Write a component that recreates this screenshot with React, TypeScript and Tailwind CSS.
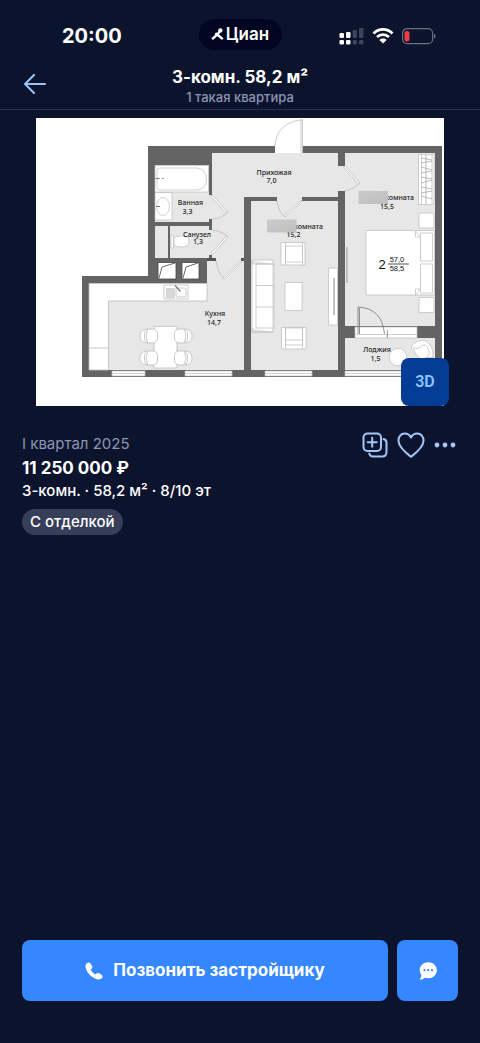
import React from "react";

function CianLogo() {
  return (
    <svg viewBox="0 0 13 13" className="h-[13px] w-[13px]" fill="none" aria-hidden="true">
      <circle cx="9.400" cy="2.400" r="2.200" fill="#fff" />
      <path d="M8.800 3.500 6.200 6.600 1.100 11.200" stroke="#fff" strokeWidth="2.400" />
      <path d="M4.300 5.200 6.800 7 11.800 11.200" stroke="#fff" strokeWidth="2.400" />
    </svg>
  );
}

function SignalIcon() {
  return (
    <svg viewBox="0 0 25 17" className="h-[17px] w-[25px]" aria-hidden="true">
      <g fill="#fff">
        <rect x="0.5" y="5" width="4.5" height="5" rx="1.3" />
        <rect x="7" y="4" width="4.5" height="6" rx="1.3" />
        <rect x="0.5" y="12" width="4.5" height="4.5" rx="1.3" />
        <rect x="7" y="12" width="4.5" height="4.5" rx="1.3" />
      </g>
      <g fill="#3d4359">
        <rect x="13.7" y="2" width="4.3" height="8" rx="1.3" />
        <rect x="20" y="0" width="4.5" height="10" rx="1.3" />
        <rect x="13.7" y="12" width="4.3" height="4.5" rx="1.3" />
        <rect x="20" y="12" width="4.5" height="4.5" rx="1.3" />
      </g>
    </svg>
  );
}

function WifiIcon() {
  return (
    <svg viewBox="0 0 22 16" className="h-4 w-[22px]" fill="none" aria-hidden="true">
      <path d="M1.5 5.4C7 .1 15 .1 20.500 5.400" stroke="#fff" strokeWidth="2.8" />
      <path d="M5 9.100c3.500-3.300 8.500-3.300 12 0" stroke="#fff" strokeWidth="2.700" />
      <path d="M11 15.600 7.400 12c2-1.900 5.200-1.900 7.200 0z" fill="#fff" />
    </svg>
  );
}

function BatteryIcon() {
  return (
    <svg viewBox="0 0 34 17" className="h-[17px] w-[34px]" fill="none" aria-hidden="true">
      <rect x="0.600" y="0.700" width="30" height="15" rx="4.500" stroke="#6a7084" strokeWidth="1.200" />
      <rect x="2.500" y="3" width="5" height="10.500" rx="2.200" fill="#f23c43" />
      <path d="M32 5.700c2 .8 2 4.200 0 5z" fill="#6a7084" />
    </svg>
  );
}

function BackIcon() {
  return (
    <svg viewBox="0 0 22 20" className="h-5 w-[22px]" fill="none" stroke="#9cc3fb" strokeWidth="2" strokeLinecap="round" strokeLinejoin="round" aria-hidden="true">
      <path d="M10 1 1 10l9 9M1.500 10H21" />
    </svg>
  );
}

function CompareIcon() {
  return (
    <svg viewBox="0 0 26 26" className="h-[26px] w-[26px]" fill="none" stroke="#a3c6f8" strokeWidth="2" strokeLinecap="round" aria-hidden="true">
      <rect x="1.500" y="1.500" width="17.500" height="17.500" rx="4" />
      <path d="M10.200 5.700v9M5.700 10.200h9" />
      <path d="M21.500 7c1.800.4 3 1.800 3 3.700V20c0 2.800-1.800 4.500-4.500 4.500h-9c-1.900 0-3.300-1.100-3.800-2.900" />
    </svg>
  );
}

function HeartIcon() {
  return (
    <svg viewBox="0 0 28 26" className="h-[26px] w-7" fill="none" stroke="#a3c6f8" strokeWidth="2" strokeLinejoin="round" aria-hidden="true">
      <path d="M14 24.800C9.500 21.300 1.800 15.600 1.500 9 1.300 4.600 4 1.500 7.700 1.500c2.700 0 5 1.300 6.300 4 1.300-2.700 3.600-4 6.300-4 3.700 0 6.400 3.100 6.200 7.500-.3 6.600-8 12.300-12.500 15.800z" />
    </svg>
  );
}

function MoreIcon() {
  return (
    <svg viewBox="0 0 22 6" className="h-1.5 w-[22px]" fill="#a3c6f8" aria-hidden="true">
      <circle cx="3" cy="3" r="2.400" />
      <circle cx="11" cy="3" r="2.400" />
      <circle cx="19" cy="3" r="2.400" />
    </svg>
  );
}

function PhoneIcon() {
  return (
    <svg viewBox="0 0 18 18" className="h-[18px] w-[18px]" fill="#fff" aria-hidden="true">
      <path d="M2.100.9C3.300.1 4.700.2 5.500 1.500l1.600 2.400c.6 1 .4 1.900-.4 2.700l-.9.800c.7 1.900 2.500 3.800 4.700 5l1-.9c.8-.7 1.700-.8 2.600-.2l2.400 1.500c1.300.9 1.500 2.100.5 3.300-1 1.200-2.500 1.700-4.300 1.300C7 16.300 1.700 11 .6 5.300.2 3.500.8 1.900 2.100.9z" />
    </svg>
  );
}

function ChatIcon() {
  return (
    <svg viewBox="0 0 18 18" className="h-[18px] w-[18px]" aria-hidden="true">
      <path d="M9.300.3C4.500.3.700 3.700.7 8c0 1.900.6 3.500 1.700 4.800C2.300 14.700 1.700 16.300.6 17.600c2 .1 3.800-.6 5.300-1.900 1 .3 2.100.5 3.400.5 4.800 0 8.500-3.400 8.500-8S14.100.3 9.300.3z" fill="#fff" />
      <g fill="#3587ff">
        <circle cx="5.500" cy="8.200" r="1.100" />
        <circle cx="9.300" cy="8.200" r="1.100" />
        <circle cx="13" cy="8.200" r="1.100" />
      </g>
    </svg>
  );
}

function KitchenChair({ x, y, flip }: { x: number; y: number; flip?: boolean }) {
  return (
    <g transform={`translate(${x} ${y})${flip ? " scale(-1 1)" : ""}`}>
      <path d="M8-6.500C2-8-1-4-1 0s3 8 9 6.500z" />
      <rect x="3.500" y="-7" width="13" height="14" rx="4.500" />
      <path d="M6.500-6Q3.500 0 6.500 6" />
    </g>
  );
}

function FloorPlan() {
  return (
    <svg
      viewBox="0 0 408 288"
      className="block w-full bg-white font-['Noto_Sans',sans-serif]"
      role="img"
      aria-label="Планировка квартиры"
    >
      <defs>
        <linearGradient id="patch" x1="0" y1="0" x2="1" y2="1">
          <stop offset="0" stopColor="#d9d9d9" />
          <stop offset="1" stopColor="#b0b0b0" />
        </linearGradient>
      </defs>
      <g transform="translate(-36 -118)">
        {/* walls and floors */}
        <path d="M148 146H442V377H82V276H148z" fill="#646464" />
        <g fill="#e7e7e7">
          <path d="M212 153H338V197H244V260H212z" />
          <path d="M207 260H244V370H89V283H207z" />
          <path d="M155 165H209V222H155zM155 226H168V258H155zM170 226H209V258H170z" />
          <path d="M251 201H338V370H251zM345 153H435V326H345zM345 338H435V370H345z" />
          <path d="M338 166H345V191H338zM277 197H302V201H277zM208 195H212V219H208zM208 230H212V255H208z" />
        </g>
        <path d="M207 258H216V261H207zM241 258H244V261H241z" fill="#555" />

        {/* openings */}
        <g fill="#fff" stroke="#bdbdbd" strokeWidth=".7">
          <path d="M112 371H145V376H112zM185 371H232V376H185zM265 371H312V376H265zM345 371H435V376H345zM355 327H417V338H355z" />
          <path d="M112 373.500H145M185 373.500H232M265 373.500H312M345 373.500H435M355 334.500H417" />
        </g>
        <path d="M275 145.500H302.500V153H275z" fill="#fff" />
        <g fill="none" stroke="#bcbcbc" strokeWidth=".8">
          <path d="M302.500 153V119.500Q276 123 275 146M301 120V153" />
          <path d="M360 183Q353 190 345 191M228 212Q221 219 212 219M212 230Q222 231 228 237M277 201Q279 213 285 217M216 261Q218 273 224 279" />
          <g fill="#fff">
            <path d="M345 166 360 183 358.500 184 343.500 167z" />
            <path d="M302 201 285 217 284 215.500 300 201z" />
            <path d="M212 195 228 212 226.500 213 211 197z" />
            <path d="M212 255 228 237 226.500 236 211 253z" />
            <path d="M242 261 224 279 223 277.500 240 261z" />
          </g>
        </g>
        <path d="M387.300 330v8M358 334V307Q382 308 384.500 334M359.500 334v-26" stroke="#777" strokeWidth=".8" fill="none" />

        {/* bathroom and toilet */}
        <g fill="#fff" stroke="#bbb" strokeWidth=".7">
          <path d="M155 165.500H208.500V192H155zM155 192.500H172V220H155z" />
          <path d="M160 168h37q9 1 9.500 11t-9.500 11h-37q-3 0-3-3v-16q0-3 3-3z" />
          <ellipse cx="163" cy="206.500" rx="6.500" ry="9" />
          <path d="M171 235h2.500v13H171z" />
          <path d="M174 238q2-2 8-2 7 0 7 5.500t-7 5.500q-6 0-8-2z" />
        </g>
        <path d="M155.500 178.500h4M162 178.500h1.500M156 206.500h4" stroke="#777" strokeWidth="1" />

        {/* ventilation shafts */}
        <path d="M158 262.500H176V279H158zM182 262.500H199V279H182z" fill="#fff" stroke="#444" strokeWidth=".8" />
        <path d="M159 278l3-11 13-4M183 278l3-11 12-4" fill="none" stroke="#555" strokeWidth=".9" />

        {/* kitchen */}
        <g fill="#fff" stroke="#bdbdbd" strokeWidth=".8">
          <path d="M89 283.500H207V301H108.500V370H89z" />
          <path d="M89 348H108.500M164 285H188V299H164z" />
          <rect x="176" y="288" width="10" height="9" rx="1.500" />
          <path d="M154 326.500H177V368H154z" />
          <KitchenChair x={141} y={336} />
          <KitchenChair x={141} y={358} />
          <KitchenChair x={191} y={336} flip />
          <KitchenChair x={191} y={358} flip />
        </g>
        <path d="M166 289h9M166 291h9M166 293h9M166 295h9M166 297h9" stroke="#999" strokeWidth=".8" />
        <path d="M175 285.500l5.500 6" stroke="#777" strokeWidth="1.200" />

        {/* living room */}
        <g fill="#fff" stroke="#c2c2c2" strokeWidth=".8">
          <path d="M252 260H273V332H252zM256 264H274V328H256zM256 285.500H274M256 307H274M252 260V264H273M252 328V332H273" />
          <path d="M281 242.500H305V265H281zM285.500 246H302.500V262H285.500zM285.500 242.500V265M302.500 242.500V265" />
          <path d="M281.500 327.500H306V349H281.500zM285.500 328H302.500V345H285.500zM285.500 340H302.500M285.500 327.500V349M302.500 327.500V349" />
          <path d="M285 282.500H302V310.500H285zM328.500 268H337.500V325H328.500z" />
        </g>
        <path d="M334 278V315" stroke="#999" strokeWidth="1.200" />

        {/* bedroom */}
        <g fill="#fff" stroke="#c2c2c2" strokeWidth=".8">
          <path d="M418.500 154.500H434V204.500H418.500zM421.500 155V204M432 155V204" />
          <path d="M419 213H434V228H419zM419 297.500H434V312.500H419z" />
          <path d="M366 230.500H434.500V295H366zM420.500 233H432.500V261H420.500zM420.500 264H432.500V293H420.500z" />
          <path d="M415.500 231v6h5M415.500 295v-6h5M415.500 231l5 6M415.500 295l5-6" />
        </g>
        <path d="M426 155V204M421 158l11 2M421 163l11-2M421 167l11 3M421 173l11-2M421 177l11 2M421 183l11-3M421 187l11 2M421 193l11-2M421 196l11 3" stroke="#aaa" strokeWidth=".8" />
        <path d="M347 247V283" stroke="#b5b5b5" strokeWidth="1.500" />

        {/* loggia */}
        <g fill="#fff" stroke="#c2c2c2" strokeWidth=".8">
          <circle cx="398" cy="357" r="8.800" />
          <path d="M411 347q3-5 9-6.500 6-1 10 4 4 6 3 13h-14q-5-2-8-10.500z" />
          <path d="M413.500 347.500q4 2 6 0 5-5 8 0 4 6-1 10-5 3-9-1-3-3-4-9z" />
        </g>

        {/* room labels */}
        <g fill="#222" fontSize="7" fontWeight="500" textAnchor="middle">
          <text x="274" y="174.500">Прихожая</text>
          <text x="271.500" y="183">7,0</text>
          <text x="190.500" y="205">Ванная</text>
          <text x="187.500" y="213.500">3,3</text>
          <text x="197" y="236.500">Санузел</text>
          <text x="198" y="243.500">1,3</text>
          <text x="215" y="315.500">Кухня</text>
          <text x="214" y="325">14,7</text>
          <text x="308.500" y="228.500">комната</text>
          <text x="293.500" y="236.500">15,2</text>
          <text x="399.500" y="200">комната</text>
          <text x="387" y="209">15,5</text>
          <text x="377" y="352">Лоджия</text>
          <text x="375.500" y="360.500">1,5</text>
        </g>
        <path d="M267 219.500H296.500V232.500H267zM358.500 191H388V204H358.500z" fill="url(#patch)" />
        <g fill="#111" textAnchor="middle" fontFamily="Liberation Sans, sans-serif">
          <text x="382" y="269" fontSize="13">2</text>
          <text x="397" y="262" fontSize="7.500">57,0</text>
          <text x="397" y="271" fontSize="7.500">58,5</text>
        </g>
        <path d="M388 264H409" stroke="#222" strokeWidth=".8" />
      </g>
    </svg>
  );
}

export default function App() {
  return (
    <div className="flex min-h-screen flex-col bg-[#0c142d] font-[Inter,sans-serif] text-white">
      <header className="border-b border-[#2a3047]">
        <div className="grid grid-cols-3 items-center pt-[18px]">
          <time className="pt-1 pl-[62px] text-xl leading-7 font-bold">20:00</time>
          <div className="flex h-[31px] w-[83px] items-center justify-center gap-0.5 justify-self-center rounded-full bg-[#020620]">
            <CianLogo />
            <span className="text-[17px] leading-6 font-semibold">Циан</span>
          </div>
          <div className="flex items-center gap-2 justify-self-end pt-1 pr-11">
            <SignalIcon />
            <WifiIcon />
            <BatteryIcon />
          </div>
        </div>
        <div className="grid grid-cols-[44px_1fr_44px] items-start px-3.5 pt-[15px] pb-1">
          <button type="button" aria-label="Назад" className="flex justify-start pt-[9px] pl-2.5">
            <BackIcon />
          </button>
          <div className="text-center">
            <h1 className="text-[17px] leading-6 font-bold">3-комн. 58,2 м²</h1>
            <p className="text-[13px] leading-4 font-medium text-[#8d94b2]">1 такая квартира</p>
          </div>
        </div>
      </header>

      <main>
        <div className="relative mx-9 mt-2">
          <FloorPlan />
          <button
            type="button"
            className="absolute right-[-5px] bottom-0 h-12 w-12 rounded-lg bg-[#043d93] font-[Roboto,sans-serif] text-base font-semibold text-[#90c4ff]"
          >
            3D
          </button>
        </div>

        <section className="flex items-start justify-between pt-[26px] pr-6 pl-[22px]">
          <div>
            <p className="text-[15px] leading-6 text-[#8d94b2]">I квартал 2025</p>
            <p className="text-[17px] leading-[25px] font-bold">11 250 000 ₽</p>
            <p className="text-[15px] leading-5 font-medium">3-комн. · 58,2 м² · 8/10 эт</p>
            <span className="mt-2 inline-block rounded-full bg-[#363e58] px-2 text-[15px] leading-[26px] font-medium">
              С отделкой
            </span>
          </div>
          <div className="flex items-center gap-[9px]">
            <button type="button" aria-label="Сравнить">
              <CompareIcon />
            </button>
            <button type="button" aria-label="В избранное">
              <HeartIcon />
            </button>
            <button type="button" aria-label="Ещё">
              <MoreIcon />
            </button>
          </div>
        </section>
      </main>

      <footer className="mt-auto flex gap-[9px] px-[22px] pb-[42px]">
        <button type="button" className="flex h-[61px] flex-1 items-center justify-center gap-2.5 rounded-lg bg-[#3587ff] text-[17px] font-bold">
          <PhoneIcon />
          Позвонить застройщику
        </button>
        <button type="button" aria-label="Написать" className="flex h-[61px] w-[61px] items-center justify-center rounded-lg bg-[#3587ff]">
          <ChatIcon />
        </button>
      </footer>
    </div>
  );
}
